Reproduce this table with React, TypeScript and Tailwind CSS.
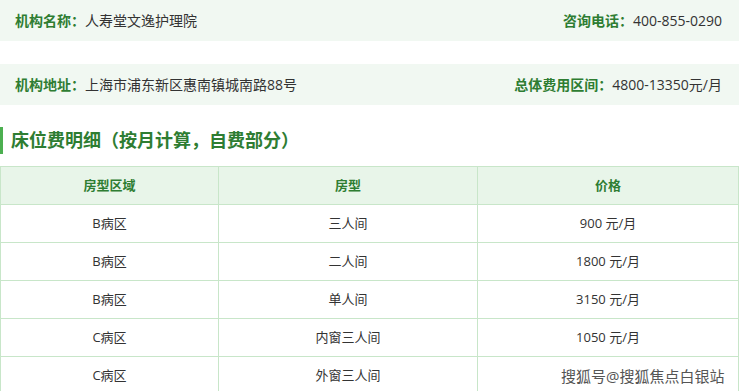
const rows = [
  { zone: "B病区", room: "三人间", price: "900 元/月" },
  { zone: "B病区", room: "二人间", price: "1800 元/月" },
  { zone: "B病区", room: "单人间", price: "3150 元/月" },
  { zone: "C病区", room: "内窗三人间", price: "1050 元/月" },
  { zone: "C病区", room: "外窗三人间", price: "" },
];

function InfoRow({ left, right }: { left: [string, string]; right: [string, string] }) {
  return (
    <div className="flex h-[41px] items-center justify-between bg-[#f1f8f2] pl-[15px] pr-[17px] text-[14px]">
      <div>
        <span className="font-bold text-[#2e7d32]">{left[0]}</span>
        <span className="text-[#333]">{left[1]}</span>
      </div>
      <div>
        <span className="font-bold text-[#2e7d32]">{right[0]}</span>
        <span className="text-[#333]">{right[1]}</span>
      </div>
    </div>
  );
}

export default function App() {
  return (
    <div
      className="relative h-[391px] w-[740px] overflow-hidden bg-white"
      style={{ fontFamily: '"Open Sans", "Noto Sans CJK SC", sans-serif' }}
    >
      <div className="w-[739px]">
        <InfoRow left={["机构名称：", "人寿堂文逸护理院"]} right={["咨询电话：", "400-855-0290"]} />
        <div className="h-[23px]" />
        <InfoRow left={["机构地址：", "上海市浦东新区惠南镇城南路88号"]} right={["总体费用区间：", "4800-13350元/月"]} />

        <div className="mt-[22px] flex h-[27px] items-center border-l-[3px] border-[#4caf50] pl-[8px]">
          <h2 className="text-[18px] font-bold text-[#2e7d32]">床位费明细（按月计算，自费部分）</h2>
        </div>

        <table className="mt-[12px] w-full table-fixed border-collapse text-[13px]">
          <colgroup>
            <col className="w-[218px]" />
            <col className="w-[259px]" />
            <col />
          </colgroup>
          <thead>
            <tr className="h-[38px] bg-[#e8f5e9]">
              <th className="border border-[#c8e6c9] font-bold text-[#2e7d32]">房型区域</th>
              <th className="border border-[#c8e6c9] font-bold text-[#2e7d32]">房型</th>
              <th className="border border-[#c8e6c9] font-bold text-[#2e7d32]">价格</th>
            </tr>
          </thead>
          <tbody>
            {rows.map((r, i) => (
              <tr key={i} className="h-[38px] text-[#333]">
                <td className="border border-[#c8e6c9] text-center">{r.zone}</td>
                <td className="border border-[#c8e6c9] text-center">{r.room}</td>
                <td className="border border-[#c8e6c9] text-center">{r.price}</td>
              </tr>
            ))}
          </tbody>
        </table>
      </div>

      {/* watermark */}
      <div
        className="absolute left-[561px] top-[365px] text-[15px] text-[#555]"
        style={{ textShadow: "0 0 2px #fff, 0 0 2px #fff" }}
      >
        搜狐号@搜狐焦点白银站
      </div>
    </div>
  );
}
